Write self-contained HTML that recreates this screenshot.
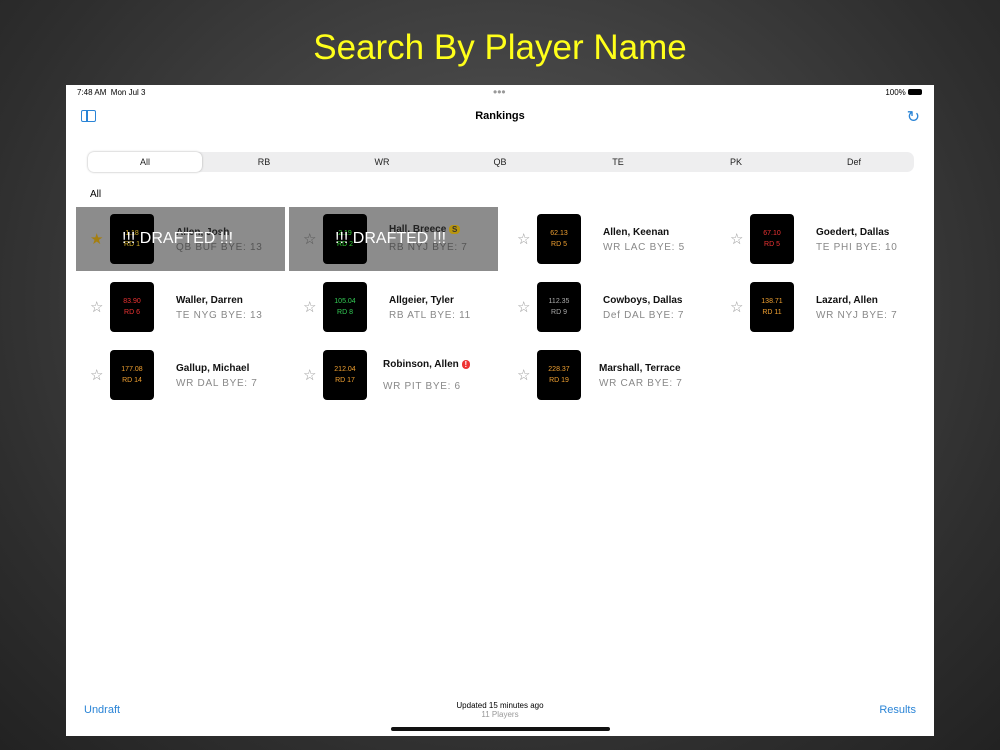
<!DOCTYPE html><html><head><style>
body{margin:0;width:1000px;height:750px;overflow:hidden;background:radial-gradient(ellipse at 50% 40%,#5a5a5a,#2e2e2e 75%,#222);font-family:"Liberation Sans",sans-serif;position:relative}
.t{position:absolute;top:28px;width:1000px;text-align:center;color:#ffff1a;font-size:35px}
.s{position:absolute;left:66px;top:85px;width:868px;height:651px;background:#fff}
.a{position:absolute}
.seg{position:absolute;left:22px;top:67px;width:826px;height:20px;background:#eeeeef;border-radius:7px}
.seg div{position:absolute;top:0;height:20px;line-height:20px;font-size:9px;text-align:center;width:118px;color:#222}
.card{position:absolute;width:209px;height:64px}
.box{position:absolute;left:34px;top:7px;width:44px;height:50px;background:#000;border-radius:4px;font-size:7px;text-align:center;line-height:11px;padding-top:14px;box-sizing:border-box}
.star{position:absolute;left:14px;top:23px;font-size:15px;color:#999}
.nm{position:absolute;left:100px;top:20px;font-size:10px;font-weight:bold;color:#111}
.sb{position:absolute;left:100px;top:35px;font-size:10px;color:#888;letter-spacing:.7px}
.dr{background:#8c8c8c}
.dr .nm{color:#222}.dr .sb{color:#555}
.dt{position:absolute;left:46px;top:23px;color:#fff;font-size:16px}
</style></head><body>
<div class="t">Search By Player Name</div>
<div class="s">
<div class="a" style="left:11px;top:3px;font-size:8px">7:48 AM&nbsp;&nbsp;Mon Jul 3</div>
<div class="a" style="left:427px;top:0px;font-size:12px;color:#999">•••</div>
<div class="a" style="right:12px;top:3px;font-size:8px">100% <span style="display:inline-block;width:14px;height:6px;background:#000;border-radius:2px"></span></div>
<div class="a" style="left:15px;top:25px;width:13px;height:10px;border:1.5px solid #2a84d6;border-radius:2px"></div>
<div class="a" style="left:20px;top:25px;width:1.5px;height:12px;background:#2a84d6"></div>
<div class="a" style="left:0;width:868px;top:25px;text-align:center;font-size:11px;font-weight:bold">Rankings</div>
<div class="a" style="right:14px;top:22px;font-size:16px;color:#2a84d6">↻</div>
<div class="seg"><div style="left:0;width:114px;background:#fff;border-radius:6px;box-shadow:0 0 2px #aaa">All</div><div style="left:117px">RB</div><div style="left:235px">WR</div><div style="left:353px">QB</div><div style="left:471px">TE</div><div style="left:589px">PK</div><div style="left:707px">Def</div></div>
<div class="a" style="left:24px;top:104px;font-size:10px">All</div>

<div class="card dr" style="left:10px;top:122px"><div class="star" style="color:#a57f10">★</div><div class="box" style="color:#d4b02c">1.18<br>RD 1</div><div class="nm">Allen, Josh</div><div class="sb">QB BUF BYE: 13</div><div class="dt">!!! DRAFTED !!!</div></div>
<div class="card dr" style="left:223px;top:122px"><div class="star" style="color:#555">☆</div><div class="box" style="color:#3c3">2.19<br>RD 2</div><div class="nm" style="top:17px">Hall, Breece <span style="background:#b8950e;color:#333;border-radius:4px;padding:0 3px;font-size:8px">S</span></div><div class="sb">RB NYJ BYE: 7</div><div class="dt">!!! DRAFTED !!!</div></div>
<div class="card" style="left:437px;top:122px"><div class="star">☆</div><div class="box" style="color:#f0a030">62.13<br>RD 5</div><div class="nm">Allen, Keenan</div><div class="sb">WR LAC BYE: 5</div></div>
<div class="card" style="left:650px;top:122px"><div class="star">☆</div><div class="box" style="color:#e33">67.10<br>RD 5</div><div class="nm">Goedert, Dallas</div><div class="sb">TE PHI BYE: 10</div></div>

<div class="card" style="left:10px;top:190px"><div class="star">☆</div><div class="box" style="color:#e33">83.90<br>RD 6</div><div class="nm">Waller, Darren</div><div class="sb">TE NYG BYE: 13</div></div>
<div class="card" style="left:223px;top:190px"><div class="star">☆</div><div class="box" style="color:#3c5">105.04<br>RD 8</div><div class="nm">Allgeier, Tyler</div><div class="sb">RB ATL BYE: 11</div></div>
<div class="card" style="left:437px;top:190px"><div class="star">☆</div><div class="box" style="color:#aaa">112.35<br>RD 9</div><div class="nm">Cowboys, Dallas</div><div class="sb">Def DAL BYE: 7</div></div>
<div class="card" style="left:650px;top:190px"><div class="star">☆</div><div class="box" style="color:#f0a030">138.71<br>RD 11</div><div class="nm">Lazard, Allen</div><div class="sb">WR NYJ BYE: 7</div></div>

<div class="card" style="left:10px;top:258px"><div class="star">☆</div><div class="box" style="color:#f0a030">177.08<br>RD 14</div><div class="nm">Gallup, Michael</div><div class="sb">WR DAL BYE: 7</div></div>
<div class="card" style="left:223px;top:258px"><div class="star">☆</div><div class="box" style="color:#f0a030">212.04<br>RD 17</div><div class="nm" style="left:94px;top:16px">Robinson, Allen <span style="background:#e33;color:#fff;border-radius:5px;padding:0 3px;font-size:8px">!</span></div><div class="sb" style="left:94px;top:38px">WR PIT BYE: 6</div></div>
<div class="card" style="left:437px;top:258px"><div class="star">☆</div><div class="box" style="color:#f0a030">228.37<br>RD 19</div><div class="nm" style="left:96px">Marshall, Terrace</div><div class="sb" style="left:96px">WR CAR BYE: 7</div></div>

<div class="a" style="left:18px;top:619px;font-size:11px;color:#2a84d6">Undraft</div>
<div class="a" style="right:18px;top:619px;font-size:11px;color:#2a84d6">Results</div>
<div class="a" style="left:0;width:868px;top:616px;text-align:center;font-size:8px">Updated 15 minutes ago<br><span style="color:#999">11 Players</span></div>
<div class="a" style="left:325px;top:642px;width:219px;height:4px;background:#111;border-radius:2px"></div>
</div>
</body></html>
